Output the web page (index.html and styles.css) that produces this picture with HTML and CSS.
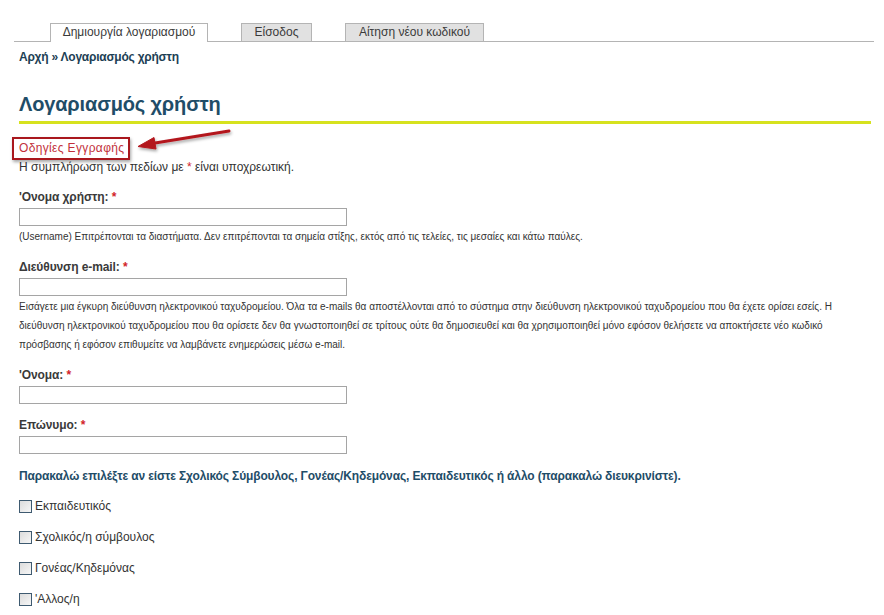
FILE: index.html
```html
<!DOCTYPE html>
<html lang="el">
<head>
<meta charset="utf-8">
<title>Λογαριασμός χρήστη</title>
<link rel="stylesheet" href="styles.css">
</head>
<body>
<div class="page">
  <ul class="tabs">
    <li class="tab active">Δημιουργία λογαριασμού</li>
    <li class="tab">Είσοδος</li>
    <li class="tab">Αίτηση νέου κωδικού</li>
  </ul>
  <div class="content">
    <div class="breadcrumb">Αρχή » Λογαριασμός χρήστη</div>
    <h1 class="title">Λογαριασμός χρήστη</h1>
    <div class="instructions"><span class="boxed">Οδηγίες Εγγραφής</span></div>
    <p class="required-note">Η συμπλήρωση των πεδίων με <span class="req">*</span> είναι υποχρεωτική.</p>

    <div class="field">
      <label class="label">'Ονομα χρήστη: <span class="req">*</span></label>
      <input class="text" type="text">
      <div class="desc">(Username) Επιτρέπονται τα διαστήματα. Δεν επιτρέπονται τα σημεία στίξης, εκτός από τις τελείες, τις μεσαίες και κάτω παύλες.</div>
    </div>

    <div class="field">
      <label class="label">Διεύθυνση e-mail: <span class="req">*</span></label>
      <input class="text" type="text">
      <div class="desc">Εισάγετε μια έγκυρη διεύθυνση ηλεκτρονικού ταχυδρομείου. Όλα τα e-mails θα αποστέλλονται από το σύστημα στην διεύθυνση ηλεκτρονικού ταχυδρομείου που θα έχετε ορίσει εσείς. Η διεύθυνση ηλεκτρονικού ταχυδρομείου που θα ορίσετε δεν θα γνωστοποιηθεί σε τρίτους ούτε θα δημοσιευθεί και θα χρησιμοποιηθεί μόνο εφόσον θελήσετε να αποκτήσετε νέο κωδικό πρόσβασης ή εφόσον επιθυμείτε να λαμβάνετε ενημερώσεις μέσω e-mail.</div>
    </div>

    <div class="field">
      <label class="label">'Ονομα: <span class="req">*</span></label>
      <input class="text" type="text">
    </div>

    <div class="field">
      <label class="label">Επώνυμο: <span class="req">*</span></label>
      <input class="text" type="text">
    </div>

    <div class="question">Παρακαλώ επιλέξτε αν είστε Σχολικός Σύμβουλος, Γονέας/Κηδεμόνας, Εκπαιδευτικός ή άλλο (παρακαλώ διευκρινίστε).</div>
    <div class="options">
      <label class="option"><input class="check" type="checkbox">Εκπαιδευτικός</label>
      <label class="option"><input class="check" type="checkbox">Σχολικός/η σύμβουλος</label>
      <label class="option"><input class="check" type="checkbox">Γονέας/Κηδεμόνας</label>
      <label class="option"><input class="check" type="checkbox">'Αλλος/η</label>
    </div>
  </div>
  <svg class="arrow" width="884" height="200" viewBox="0 0 884 200">
    <defs>
      <filter id="sh" x="-20%" y="-50%" width="140%" height="200%">
        <feDropShadow dx="1" dy="2" stdDeviation="1.5" flood-color="#000" flood-opacity="0.35"/>
      </filter>
    </defs>
    <g filter="url(#sh)" fill="#b3161e" stroke="#b3161e">
      <line x1="229" y1="131" x2="152" y2="143.5" stroke-width="3" stroke-linecap="round"/>
      <polygon points="138,146.5 154,137.5 156,149" stroke-width="1" stroke-linejoin="round"/>
    </g>
  </svg>
</div>
</body>
</html>
```
FILE: styles.css
```css
html, body {
  margin: 0;
  padding: 0;
  background: #fff;
}
body {
  font-family: "Liberation Sans", Arial, sans-serif;
  font-size: 12px;
  color: #333;
}
.page {
  position: relative;
  padding-top: 23px;
}
.tabs {
  list-style: none;
  margin: 0 10px 0 14px;
  padding: 0 0 0 36px;
  display: flex;
  gap: 33px;
  border-bottom: 1px solid #b4b4b4;
}
.tab {
  height: 17px;
  line-height: 17px;
  padding: 0 8px;
  border: 1px solid #b4b4b4;
  border-bottom: none;
  background: #e1e1e1;
  color: #3a3a3a;
  font-size: 12px;
  text-align: center;
  white-space: nowrap;
}
.tab.active {
  background: #fff;
  width: 140px;
  margin-bottom: -1px;
  height: 18px;
}
.tab:nth-child(2) { width: 53px; }
.tab:nth-child(3) { width: 121px; }
.content {
  padding: 7px 13px 0 19px;
}
.breadcrumb {
  font-size: 12px;
  line-height: 16px;
  font-weight: bold;
  letter-spacing: -0.24px;
  color: #1d3f55;
}
.title {
  margin: 27px 0 0 0;
  font-size: 20px;
  line-height: 24px;
  font-weight: bold;
  letter-spacing: -0.15px;
  color: #1f4d68;
  padding-bottom: 5px;
  border-bottom: 3px solid #d6e21e;
}
.instructions {
  margin-top: 16px;
  line-height: 16px;
}
.boxed {
  color: #c2303a;
  font-size: 12px;
  letter-spacing: 0.35px;
  position: relative;
}
.boxed::before {
  content: "";
  position: absolute;
  left: -7px;
  right: -6px;
  top: -4px;
  bottom: -5px;
  border: 2px solid #a9171d;
  box-shadow: 1px 2px 3px rgba(0,0,0,0.35);
}
.required-note {
  margin: 3px 0 0 0;
  line-height: 16px;
  font-size: 12px;
}
.req {
  color: #d21f2a;
}
.field {
  margin-top: 14px;
}
.field + .field {
  margin-top: 13px;
}
.label {
  display: block;
  font-weight: bold;
  font-size: 12px;
  line-height: 16px;
  letter-spacing: -0.1px;
  color: #3a3a3a;
}
.text {
  display: block;
  box-sizing: border-box;
  width: 328px;
  height: 18px;
  margin: 3px 0 0 0;
  padding: 0 2px;
  border: 1px solid #a5a5a5;
  background: #fff;
  font: 12px "Liberation Sans", Arial, sans-serif;
}
.desc {
  font-size: 10px;
  line-height: 19px;
  color: #333;
  margin-top: 1px;
}
.question {
  margin-top: 14px;
  font-size: 12px;
  line-height: 16px;
  font-weight: bold;
  letter-spacing: -0.13px;
  color: #1f4d68;
}
.options {
  display: flex;
  flex-direction: column;
  gap: 15px;
  margin-top: 14px;
}
.option {
  display: flex;
  align-items: center;
  height: 16px;
  line-height: 16px;
  font-size: 12px;
  color: #333;
}
.check {
  appearance: none;
  -webkit-appearance: none;
  box-sizing: border-box;
  width: 13px;
  height: 13px;
  margin: 0 3px 0 0;
  border: 1px solid #3e5a70;
  background: linear-gradient(135deg, #dcdcdc, #f6f6f6);
}
.arrow {
  position: absolute;
  left: 0;
  top: 0;
  pointer-events: none;
}
```
